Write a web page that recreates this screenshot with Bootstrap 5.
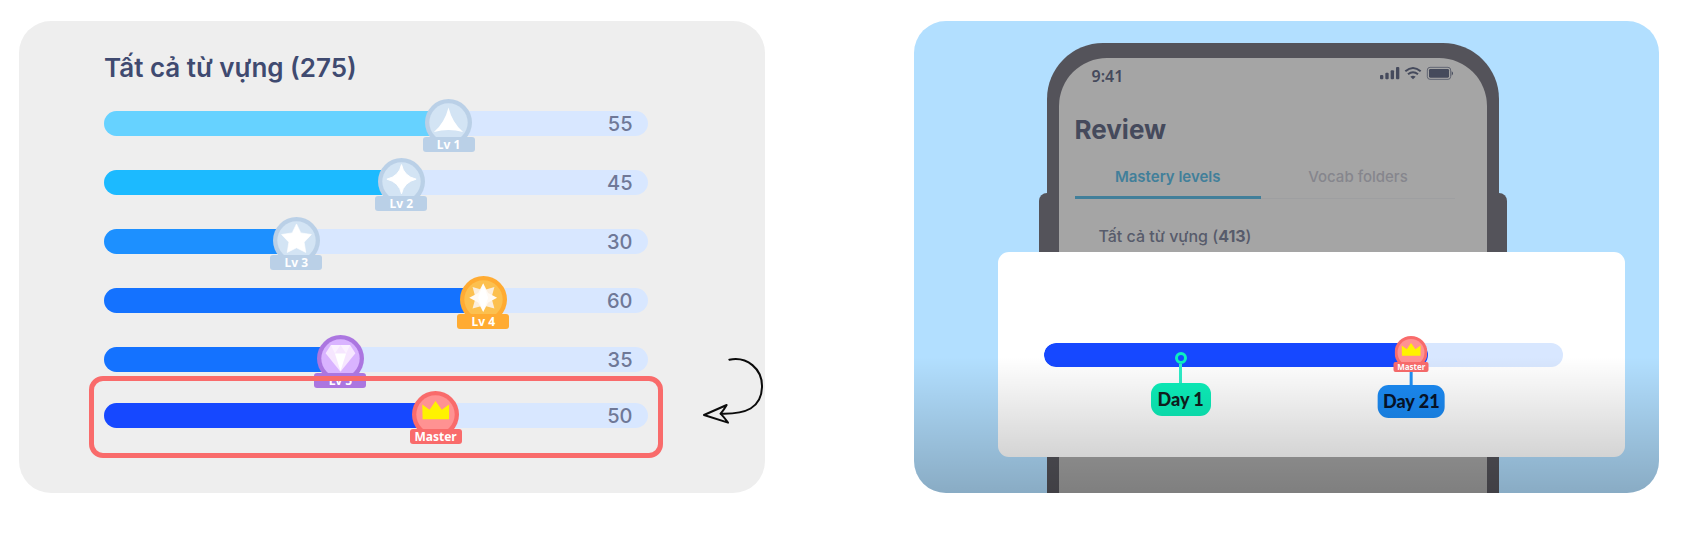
<!DOCTYPE html>
<html lang="vi">
<head>
<meta charset="utf-8">
<meta name="viewport" content="width=device-width, initial-scale=1">
<title>Vocabulary mastery</title>
<link href="https://cdn.jsdelivr.net/npm/bootstrap@5.3.0/dist/css/bootstrap.min.css" rel="stylesheet">
<style>
body { font-family: Inter, "Noto Sans", sans-serif; background: #fff; }
.stage { grid-template-columns: minmax(0, 1fr) minmax(0, 1fr); padding: 21px 38px 41px 19px; gap: 149px; }
.panel { border-radius: 32px; }

/* Level list */
.panel-levels { background: #eee; padding: 31px 117px 35px 85px; }
.panel-levels h2 { font-size: 26px; line-height: 32px; font-weight: 600; color: #3f4a70; margin: 0 0 27px; }
.levels { gap: 34px; }
.level { height: 25px; }
.level .progress { height: 25px; border-radius: 13px; background: #d8e7ff; }
.level-count { right: 15px; top: 0; font-size: 20px; line-height: 27px; font-weight: 500; color: #6f7897; }
.fill-1 { background: #66d2ff; }
.fill-2 { background: #1cbaff; }
.fill-3 { background: #1d90ff; }
.fill-4 { background: #1472ff; }
.fill-6 { background: #1648ff; }
.medal { top: -12px; width: 52px; transform: translateX(-50%); }
.medal svg { display: block; width: 47px; height: 47px; margin: 0 auto -9px; }
.medal span { display: block; position: relative; height: 15px; border-radius: 3px; font: 700 12px/15px "Noto Sans", sans-serif; text-align: center; color: #fff; }
.medal .ribbon-silver { background: #bad0e7; }
.medal .ribbon-gold { background: #ffab32; }
.medal .ribbon-violet { background: #ab76e0; }
.medal .ribbon-red { background: #f96b6b; }
.highlight { margin: 4px -15px 0; padding: 22px 10px 25px; border: 5px solid #f96b6b; border-radius: 14px; }
.turn-arrow { left: 683px; top: 335px; width: 64px; height: 69px; }

/* Phone preview */
.panel-phone { display: grid; background: #b2dfff; }
.panel-phone > * { grid-area: 1 / 1; }
.panel-phone::after { content: ""; position: absolute; left: 0; right: 0; bottom: 0; height: 136px; background: linear-gradient(rgba(0,0,0,0), rgba(0,0,0,.23)); z-index: 3; pointer-events: none; }
.phone { margin: 22px 160px 0 133px; padding: 15px 12px 0; border-radius: 56px 56px 0 0; background: #54535a; min-width: 0; }
.phone::before { content: ""; position: absolute; left: -8px; right: -8px; top: 150px; height: 120px; border-radius: 8px; background: #54535a; z-index: -1; }
.phone-screen { height: 100%; background: #a5a5a5; border-radius: 48px 48px 0 0; padding: 8px 32px 0 16px; }
.clock { padding: 0 0 0 17px; font: 600 16px/20px "Noto Sans", sans-serif; color: #454a5c; }
.status-icons { width: 75px; height: 14px; }
.phone h1 { font-size: 26px; line-height: 32px; font-weight: 700; color: #454a5c; margin: 28px 0 19px; }
.tabs { box-shadow: inset 0 -1px #9e9fa1; }
.tabs a { font-size: 15px; line-height: 24px; font-weight: 500; padding-bottom: 7px; text-align: center; text-decoration: none; border-bottom: 3px solid transparent; color: #86868d; }
.tabs a.active { width: 49%; font-weight: 600; color: #417f9a; border-color: #417f9a; }
.tabs a:last-child { width: 51%; }
.phone h3 { font-size: 16px; line-height: 24px; font-weight: 500; color: #575b6b; margin: 25px 0 0 24px; }
.day-card { margin: 231px 34px 36px 84px; padding: 91px 62px 89px 46px; border-radius: 11px; background: #fff; z-index: 2; }
.timeline .progress { height: 24px; border-radius: 12px; background: #d8e7ff; }
.timeline .progress-bar { border-radius: 12px; }
.pin { top: 9px; transform: translateX(-50%); }
.pin i { display: block; width: 12px; height: 12px; margin: 0 auto; border: 3px solid #0cf0c0; border-radius: 50%; }
.pin b { display: block; width: 3px; height: 19px; margin: 0 auto; background: #2eeec8; }
.pin-label { display: block; min-width: 60px; height: 33px; padding: 0 5px; border-radius: 11px; text-align: center; font: 900 18px/32px Lato, sans-serif; color: #10201e; white-space: nowrap; background: #0cf0bb; }
.pin-end { top: 20px; }
.pin-end b { height: 22px; background: #2191f5; }
.pin-end .pin-label { background: #1b8bf5; color: #06142a; }
.medal-small { top: -7px; width: 35px; }
.medal-small svg { width: 33px; height: 33px; margin-bottom: -7px; }
.medal-small span { height: 10px; border-radius: 2px; font-size: 8px; line-height: 10px; }
</style>
</head>
<body>
<svg class="d-none" aria-hidden="true">
  <symbol id="crown-medal" viewBox="0 0 142 142">
    <circle cx="71" cy="71" r="71" fill="#f96b6b"/><circle cx="71" cy="71" r="58" fill="#ff9292"/>
    <path d="M31 41l22 16 18-27 19 27 22-16v44H32z" fill="#fff200"/>
  </symbol>
</svg>
<main class="stage d-grid">
  <section class="panel panel-levels position-relative">
    <h2>Tất cả từ vựng (275)</h2>
    <div class="levels d-flex flex-column">
      <div class="level position-relative">
        <div class="progress" role="progressbar" aria-label="Lv 1"><div class="progress-bar fill-1" style="width:63.4%"></div></div>
        <div class="medal position-absolute" style="left:63.4%">
          <svg viewBox="0 0 142 142"><circle cx="71" cy="71" r="71" fill="#bad0e7"/><circle cx="71" cy="71" r="58" fill="#d3e4f4"/><path d="M71 26Q83 73 115 100Q71 88 27 100Q59 73 71 26z" fill="#fff"/></svg>
          <span class="ribbon-silver">Lv 1</span>
        </div>
        <div class="level-count position-absolute">55</div>
      </div>
      <div class="level position-relative">
        <div class="progress" role="progressbar" aria-label="Lv 2"><div class="progress-bar fill-2" style="width:54.7%"></div></div>
        <div class="medal position-absolute" style="left:54.7%">
          <svg viewBox="0 0 142 142"><circle cx="71" cy="71" r="71" fill="#bad0e7"/><circle cx="71" cy="71" r="58" fill="#d3e4f4"/><path d="M71 20Q78 55 115 64Q78 73 71 108Q64 73 27 64Q64 55 71 20z" fill="#fff" stroke="#fff" stroke-width="3" stroke-linejoin="round"/></svg>
          <span class="ribbon-silver">Lv 2</span>
        </div>
        <div class="level-count position-absolute">45</div>
      </div>
      <div class="level position-relative">
        <div class="progress" role="progressbar" aria-label="Lv 3"><div class="progress-bar fill-3" style="width:35.4%"></div></div>
        <div class="medal position-absolute" style="left:35.4%">
          <svg viewBox="0 0 142 142"><circle cx="71" cy="71" r="71" fill="#bad0e7"/><circle cx="71" cy="71" r="58" fill="#d3e4f4"/><path d="M71 21l13 27 32 5-22 23 5 31-28-14-28 14 5-31-22-23 32-5z" fill="#fff" stroke="#fff" stroke-width="2" stroke-linejoin="round"/></svg>
          <span class="ribbon-silver">Lv 3</span>
        </div>
        <div class="level-count position-absolute">30</div>
      </div>
      <div class="level position-relative">
        <div class="progress" role="progressbar" aria-label="Lv 4"><div class="progress-bar fill-4" style="width:69.8%"></div></div>
        <div class="medal position-absolute" style="left:69.8%">
          <svg viewBox="0 0 142 142"><circle cx="71" cy="71" r="71" fill="#ffab32"/><circle cx="71" cy="71" r="58" fill="#fcc04f"/><path d="M38 33l33 10 33-10-9 33 9 32-33-9-33 9 9-32z" fill="#fbeedd"/><path d="M70 22l15 29 27 15-27 14-15 29-15-29-27-14 27-15z" fill="#fffaf4"/><path d="M70 24l15 42-15 41-15-41z" fill="#fff"/></svg>
          <span class="ribbon-gold">Lv 4</span>
        </div>
        <div class="level-count position-absolute">60</div>
      </div>
      <div class="level position-relative">
        <div class="progress" role="progressbar" aria-label="Lv 5"><div class="progress-bar fill-4" style="width:43.5%"></div></div>
        <div class="medal position-absolute" style="left:43.5%">
          <svg viewBox="0 0 142 142"><circle cx="71" cy="71" r="71" fill="#ab76e0"/><circle cx="71" cy="71" r="58" fill="#d9b3ff"/><path d="M42 30h58l16 25-45 56-45-56z" fill="#f6e6ff"/><path d="M54 56h34l-17 53z" fill="#fff"/><path d="M42 30l12 26 17-26 17 26 12-26z" fill="#fbf2ff"/></svg>
          <span class="ribbon-violet">Lv 5</span>
        </div>
        <div class="level-count position-absolute">35</div>
      </div>
    </div>
    <div class="highlight position-relative z-1">
      <div class="level position-relative">
        <div class="progress" role="progressbar" aria-label="Master"><div class="progress-bar fill-6" style="width:61%"></div></div>
        <div class="medal position-absolute" style="left:61%">
          <svg viewBox="0 0 142 142"><use href="#crown-medal"/></svg>
          <span class="ribbon-red">Master</span>
        </div>
        <div class="level-count position-absolute">50</div>
      </div>
    </div>
    <svg class="turn-arrow position-absolute" viewBox="604 288 192 207" fill="none" stroke="#0b0b0b" stroke-linejoin="round" stroke-linecap="round" aria-hidden="true">
      <path d="M686 299C738 288 786 326 784 382C782 444 736 463 660 461" stroke-width="6"/>
      <path d="M678 435L610 465L682 488Q672 474 660 461Q670 449 678 435z" stroke-width="6"/>
    </svg>
  </section>

  <section class="panel panel-phone position-relative overflow-hidden">
    <div class="phone position-relative z-1">
      <div class="phone-screen">
        <div class="d-flex justify-content-between align-items-start">
          <div class="clock">9:41</div>
          <svg class="status-icons" viewBox="395 165 225 42" aria-hidden="true">
            <g fill="#454a5c"><rect x="395" y="192" width="10" height="13" rx="3"/><rect x="411" y="185" width="10" height="20" rx="3"/><rect x="427" y="178" width="10" height="27" rx="3"/><rect x="443" y="168" width="10" height="37" rx="3"/><path d="M486 197q8-6 16 0l-8 8z"/><rect x="542" y="174" width="60" height="26" rx="4"/><path d="M610 180q8 7 0 14z"/></g>
            <g fill="none" stroke="#454a5c"><path d="M471 181q23-20 46 0M479 190q15-13 30 0" stroke-width="6"/><rect x="537" y="169" width="70" height="36" rx="8" stroke-width="3" opacity=".7"/></g>
          </svg>
        </div>
        <h1>Review</h1>
        <nav class="tabs d-flex">
          <a class="active" href="#">Mastery levels</a>
          <a href="#">Vocab folders</a>
        </nav>
        <h3>Tất cả từ vựng (<strong>413</strong>)</h3>
      </div>
    </div>
    <div class="day-card position-relative">
      <div class="timeline position-relative">
        <div class="progress" role="progressbar" aria-label="Day 21"><div class="progress-bar fill-6" style="width:74%"></div></div>
        <div class="pin position-absolute" style="left:26.4%"><i></i><b></b><span class="pin-label">Day 1</span></div>
        <div class="pin pin-end position-absolute" style="left:70.8%"><b></b><span class="pin-label">Day 21</span></div>
        <div class="medal medal-small position-absolute" style="left:70.8%">
          <svg viewBox="0 0 142 142"><use href="#crown-medal"/></svg>
          <span class="ribbon-red">Master</span>
        </div>
      </div>
    </div>
  </section>
</main>
<script src="https://cdn.jsdelivr.net/npm/bootstrap@5.3.0/dist/js/bootstrap.bundle.min.js"></script>
</body>
</html>
